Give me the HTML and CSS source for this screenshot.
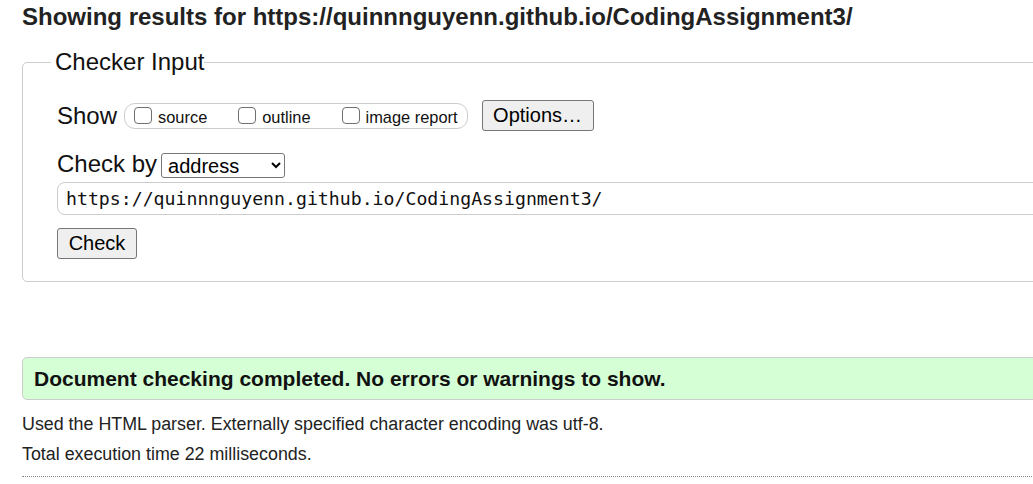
FILE: index.html
```html
<!DOCTYPE html>
<html lang="en">
<head>
<meta charset="utf-8">
<title>Nu Html Checker</title>
<link rel="stylesheet" href="styles.css">
</head>
<body>
<div class="page">
  <h2 class="title">Showing results for https://quinnnguyenn.github.io/CodingAssignment3/</h2>
  <fieldset class="checker">
    <legend class="legend">Checker Input</legend>
    <div class="row row-show">
      <span class="label">Show</span>
      <div class="group">
        <label class="opt"><input type="checkbox" class="box"><span>source</span></label>
        <label class="opt"><input type="checkbox" class="box"><span>outline</span></label>
        <label class="opt last"><input type="checkbox" class="box"><span>image report</span></label>
      </div>
      <button class="btn btn-options" type="button">Options…</button>
    </div>
    <div class="row row-by">
      <span class="label">Check by</span>
      <select class="sel"><option>address</option></select>
    </div>
    <input class="url" type="text" value="https://quinnnguyenn.github.io/CodingAssignment3/">
    <div class="row row-check">
      <button class="btn btn-check" type="button">Check</button>
    </div>
  </fieldset>
  <div class="success">Document checking completed. No errors or warnings to show.</div>
  <p class="info">Used the HTML parser. Externally specified character encoding was utf-8.</p>
  <p class="info">Total execution time 22 milliseconds.</p>
  <hr class="rule">
</div>
</body>
</html>
```
FILE: styles.css
```css
html, body {
  margin: 0;
  padding: 0;
  overflow: hidden;
  background: #fff;
}
body {
  font-family: "Liberation Sans", Arial, sans-serif;
  color: #000;
}
.page {
  width: 1200px;
  padding-left: 22px;
}
.title {
  margin: 0;
  padding-top: 4px;
  font-size: 24px;
  line-height: 26px;
  font-weight: bold;
  color: #222;
}
.checker {
  margin: 18px 0 0 0;
  padding: 0 20px 22px 34px;
  border: 1px solid #ccc;
  border-radius: 5px;
  display: flex;
  flex-direction: column;
  align-items: flex-start;
  min-width: 0;
}
.legend {
  font-size: 24px;
  line-height: 28px;
  padding: 0 0 0 4px;
  margin-left: -6px;
  color: #111;
}
.row {
  display: flex;
  align-items: center;
}
.row-show {
  margin-top: 24px;
  height: 31px;
}
.label {
  font-size: 24px;
  line-height: 28px;
  color: #111;
}
.group {
  margin-left: 7px;
  height: 24px;
  border: 1px solid #ccc;
  border-radius: 11px;
  display: flex;
  align-items: center;
  padding: 0 9px 0 9px;
}
.opt {
  display: flex;
  align-items: center;
  font-size: 16.4px;
  margin-right: 31px;
  color: #111;
}
.opt.last {
  margin-right: 0;
}
.opt span {
  margin-top: 4px;
}
.box {
  appearance: none;
  -webkit-appearance: none;
  width: 18px;
  height: 17px;
  margin: 0 6px 0 0;
  border: 1.5px solid #6f6f6f;
  border-radius: 4px;
  background: #fff;
  box-sizing: border-box;
}
.btn {
  font-family: "Liberation Sans", Arial, sans-serif;
  font-size: 20px;
  background: #efefef;
  border: 1px solid #767676;
  border-radius: 3px;
  color: #000;
  padding: 0;
  box-sizing: border-box;
}
.btn-options {
  margin-left: 14px;
  width: 112px;
  height: 31px;
}
.row-by {
  margin-top: 19px;
  align-items: flex-end;
  height: 28px;
}
.sel {
  margin-left: 4px;
  width: 124px;
  height: 25px;
  font-family: "Liberation Sans", Arial, sans-serif;
  font-size: 20px;
  border: 1px solid #767676;
  border-radius: 3px;
  background: #fff;
  color: #000;
  padding: 0 0 0 2px;
}
.url {
  margin-top: 4px;
  width: 1100px;
  height: 33px;
  box-sizing: border-box;
  border: 1px solid #ccc;
  border-radius: 8px;
  padding: 0 8px;
  font-family: "DejaVu Sans Mono", monospace;
  font-size: 18.2px;
  color: #111;
  margin-left: 0;
}
.row-check {
  margin-top: 13px;
}
.btn-check {
  width: 80px;
  height: 31px;
}
.success {
  margin-top: 75px;
  height: 43px;
  box-sizing: border-box;
  border: 1px solid #ccc;
  border-radius: 5px;
  background: #d5ffd5;
  padding: 0 11px;
  font-size: 21px;
  font-weight: bold;
  line-height: 41px;
  color: #111;
}
.info {
  margin: 9px 0 0 0;
  font-size: 17.85px;
  line-height: 30px;
  color: #222;
}
.info + .info {
  margin-top: 0;
}
.rule {
  margin: 7px 0 0 0;
  border: 0;
  border-top: 1px dotted #888;
  height: 0;
}
```
